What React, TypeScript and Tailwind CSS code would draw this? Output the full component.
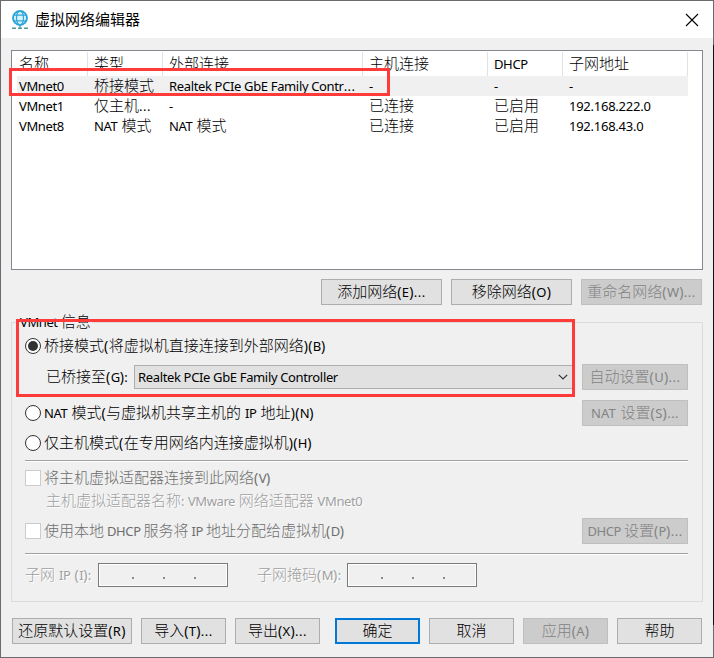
import React from "react";
import clsx from "clsx";

function T({ children, latin = "tracking-[-0.37px] [word-spacing:1px]", className }: { children: string; latin?: string; className?: string }) {
  const runs = children.match(/[\u4e00-\u9fff]+|\.\.\.|[()]|[^\u4e00-\u9fff()]+?(?=\.\.\.|[\u4e00-\u9fff()]|$)/g) ?? [];
  return (
    <span className={clsx("-mt-px mb-px block whitespace-pre", className)}>
      {runs.map((run, i) => {
        if (/[\u4e00-\u9fff]/.test(run)) return <span key={i} className="font-['Noto_Sans_CJK_SC',sans-serif] text-[15px] font-light">{run}</span>;
        if (run === "...") return <span key={i} className="text-[13px] tracking-[0.5px]">{run}</span>;
        if (run === "(" || run === ")") return <span key={i} className="text-[14px] tracking-[0.4px]">{run}</span>;
        return <span key={i} className={clsx("text-[13px]", latin)}>{run}</span>;
      })}
    </span>
  );
}

function Btn({ children, className, disabled, primary, latin = "tracking-[0.2px] [word-spacing:1px]" }: { children: string; className: string; disabled?: boolean; primary?: boolean; latin?: string }) {
  return (
    <button
      disabled={disabled}
      className={clsx(
        "flex h-[26px] shrink-0 items-center justify-center leading-[22px]",
        disabled
          ? "border border-[#bfbfbf] bg-[#cccccc] text-[#838383]"
          : primary
            ? "border-2 border-[#0078d7] bg-[#e1e1e1]"
            : "border border-[#adadad] bg-[#e1e1e1]",
        className
      )}
    >
      <T latin={latin}>{children}</T>
    </button>
  );
}

const columns = [
  { label: "名称", width: "w-[71px] pl-[2px]" },
  { label: "类型", width: "w-[75px] pl-[6px]" },
  { label: "外部连接", width: "w-[200px] pl-[6px]" },
  { label: "主机连接", width: "w-[125px] pl-[6px]" },
  { label: "DHCP", width: "w-[75px] pl-[6px]" },
  { label: "子网地址", width: "w-[125px] pl-[6px]" },
];

const rows = [
  ["VMnet0", "桥接模式", "Realtek PCIe GbE Family Contr...", "-", "-", "-"],
  ["VMnet1", "仅主机...", "-", "已连接", "已启用", "192.168.222.0"],
  ["VMnet8", "NAT 模式", "NAT 模式", "已连接", "已启用", "192.168.43.0"],
];

function NetworkList() {
  return (
    <div className="h-[220px] w-[692px] border border-[#828790] bg-white pl-[5px]">
      <div className="flex h-[25px] pt-px">
        {columns.map((c) => (
          <div key={c.label} className={clsx("h-6 shrink-0 border-r border-[#e2e2e2] leading-6", c.width)}>
            <T>{c.label}</T>
          </div>
        ))}
      </div>
      {rows.map((r, i) => (
        <div key={i} className={clsx("flex h-5 w-[671px] leading-5", i === 0 && "bg-[#f0f0f0]")}>
          {r.map((cell, j) => (
            <div key={j} className={clsx("shrink-0", columns[j].width)}>
              <T latin={j === 5 ? "tracking-[-0.25px]" : j === 2 && i === 0 ? "tracking-[-0.35px]" : undefined}>{cell}</T>
            </div>
          ))}
        </div>
      ))}
    </div>
  );
}

function Radio({ checked, children }: { checked?: boolean; children: string }) {
  return (
    <label className="flex h-5 items-center gap-[3px] leading-5">
      <span className="flex size-4 shrink-0 items-center justify-center rounded-full border border-[#333] bg-white">
        {checked && <span className="size-[10px] rounded-full bg-[#333]" />}
      </span>
      <T>{children}</T>
    </label>
  );
}

function Check({ children }: { children: string }) {
  return (
    <label className="flex h-5 items-center gap-[3px] leading-5 text-[#6d6d6d]">
      <span className="size-4 shrink-0 border border-[#cccccc] bg-white" />
      <T latin="tracking-[-0.4px]">{children}</T>
    </label>
  );
}

function Divider() {
  return <div className="h-[2px] w-[663px] border-b border-white bg-[#a0a0a0]" />;
}

function IpField() {
  return (
    <div className="flex h-6 w-[130px] shrink-0 items-end justify-center gap-[29px] border border-[#7a7a7a] pb-[7px] pl-[1px] ring-1 ring-inset ring-white">
      <span className="size-[2px] bg-[#8a8a8a]" />
      <span className="size-[2px] bg-[#8a8a8a]" />
      <span className="size-[2px] bg-[#8a8a8a]" />
    </div>
  );
}

function GlobeIcon() {
  return (
    <svg width="18" height="20" viewBox="0 0 18 20" fill="none">
      <circle cx="9" cy="8" r="7" fill="#d8f1fb" stroke="#2fa6d6" strokeWidth="1.9" />
      <ellipse cx="9" cy="8" rx="3.5" ry="7" stroke="#2fa6d6" strokeWidth="1.2" />
      <path d="M2.5 5.2h13M2 10.8h14M9 15v3" stroke="#2fa6d6" strokeWidth="1.3" />
      <path d="M1 18.2h4M7 18.2h4M13 18.2h4" stroke="#4f9a94" strokeWidth="1.6" />
    </svg>
  );
}

export default function App() {
  return (
    <div className="relative flex h-[658px] w-[714px] flex-col border border-[#6b6b6b] bg-[#f0f0f0] font-['Noto_Sans','Noto_Sans_CJK_SC',sans-serif] text-black">
      <header className="flex h-[37px] shrink-0 items-center bg-white pl-[10px] pr-[14px]">
        <GlobeIcon />
        <h1 className="ml-[6px] flex-1 pb-[2px] text-[15px] leading-5">虚拟网络编辑器</h1>
        <svg width="14" height="14" viewBox="0 0 14 14" stroke="#000" strokeWidth="1.1">
          <path d="M1 1l12 12M13 1L1 13" />
        </svg>
      </header>

      <main className="flex flex-col pl-[10px] pt-3">
        <NetworkList />
        <div className="mt-[9px] flex gap-[9px] pl-[310px]">
          <Btn className="w-[121px]">添加网络(E)...</Btn>
          <Btn className="w-[121px]">移除网络(O)</Btn>
          <Btn className="w-[121px]" disabled>重命名网络(W)...</Btn>
        </div>

        <section className="mt-[17px] h-[280px] w-[692px] border border-[#dcdcdc] pl-[13px]">
          <div className="-mt-[11px] -ml-[6px] flex h-[22px] w-[73px] bg-[#f0f0f0] pl-px leading-[20px]">
            <T latin="tracking-[-0.4px]">VMnet 信息</T>
          </div>
          <div className="mt-[2px]">
            <Radio checked>桥接模式(将虚拟机直接连接到外部网络)(B)</Radio>
          </div>
          <div className="mt-2 flex h-[26px] items-center">
            <T className="w-[109px] pl-[21px]">已桥接至(G):</T>
            <div className="flex h-6 w-[439px] items-center justify-between border border-[#adadad] bg-[#e1e1e1] pl-[3px] pr-[4px] leading-5">
              <T latin="tracking-[-0.35px]">Realtek PCIe GbE Family Controller</T>
              <svg width="10" height="6" viewBox="0 0 10 6" fill="none" stroke="#333" strokeWidth="1.2">
                <path d="M0.8 0.8L5 5l4.2-4.2" />
              </svg>
            </div>
            <Btn className="ml-[9px] w-[106px]" disabled>自动设置(U)...</Btn>
          </div>
          <div className="mt-[10px] flex h-[26px] w-[663px] items-center justify-between">
            <Radio>NAT 模式(与虚拟机共享主机的 IP 地址)(N)</Radio>
            <Btn className="w-[106px]" disabled>NAT 设置(S)...</Btn>
          </div>
          <div className="mt-[7px]">
            <Radio>仅主机模式(在专用网络内连接虚拟机)(H)</Radio>
          </div>
          <div className="mt-[7px]"><Divider /></div>
          <div className="mt-[6px]">
            <Check>将主机虚拟适配器连接到此网络(V)</Check>
          </div>
          <div className="mt-[3px] flex h-5 pl-[21px] leading-5 text-[#a0a0a0] [text-shadow:1px_1px_0_#fff]">
            <T latin="tracking-[-0.4px] [word-spacing:0.8px]">主机虚拟适配器名称: VMware 网络适配器 VMnet0</T>
          </div>
          <div className="mt-[7px] flex h-[26px] w-[663px] items-center justify-between">
            <Check>使用本地 DHCP 服务将 IP 地址分配给虚拟机(D)</Check>
            <Btn className="w-[106px]" latin="tracking-[-0.4px]" disabled>DHCP 设置(P)...</Btn>
          </div>
          <div className="mt-[9px]"><Divider /></div>
          <div className="mt-2 flex h-6 items-center leading-5 text-[#a0a0a0] [text-shadow:1px_1px_0_#fff]">
            <T className="w-[73px]">子网 IP (I):</T>
            <IpField />
            <T className="ml-[29px] w-[90px]">子网掩码(M):</T>
            <IpField />
          </div>
        </section>

        <footer className="mt-4 flex pl-px">
          <Btn className="mr-[9px] w-[120px]">还原默认设置(R)</Btn>
          <Btn className="mr-[9px] w-[85px]">导入(T)...</Btn>
          <Btn className="mr-[15px] w-[85px]">导出(X)...</Btn>
          <Btn className="mr-[9px] w-[85px]" primary>确定</Btn>
          <Btn className="mr-[9px] w-[85px]">取消</Btn>
          <Btn className="mr-[9px] w-[85px]" disabled>应用(A)</Btn>
          <Btn className="w-[85px]">帮助</Btn>
        </footer>
      </main>

      {/* Highlight frames laid over the dialog */}
      <div className="absolute left-[8px] top-[67px] h-[28px] w-[381px] border-3 border-[#ff3b3a]" />
      <div className="absolute left-[15px] top-[318px] h-[78px] w-[559px] border-3 border-[#ff3b3a]" />
      {/* Dark strip behind the window's right edge */}
      <div className="absolute -right-px top-[44px] h-[580px] w-px bg-[#111]" />
    </div>
  );
}
